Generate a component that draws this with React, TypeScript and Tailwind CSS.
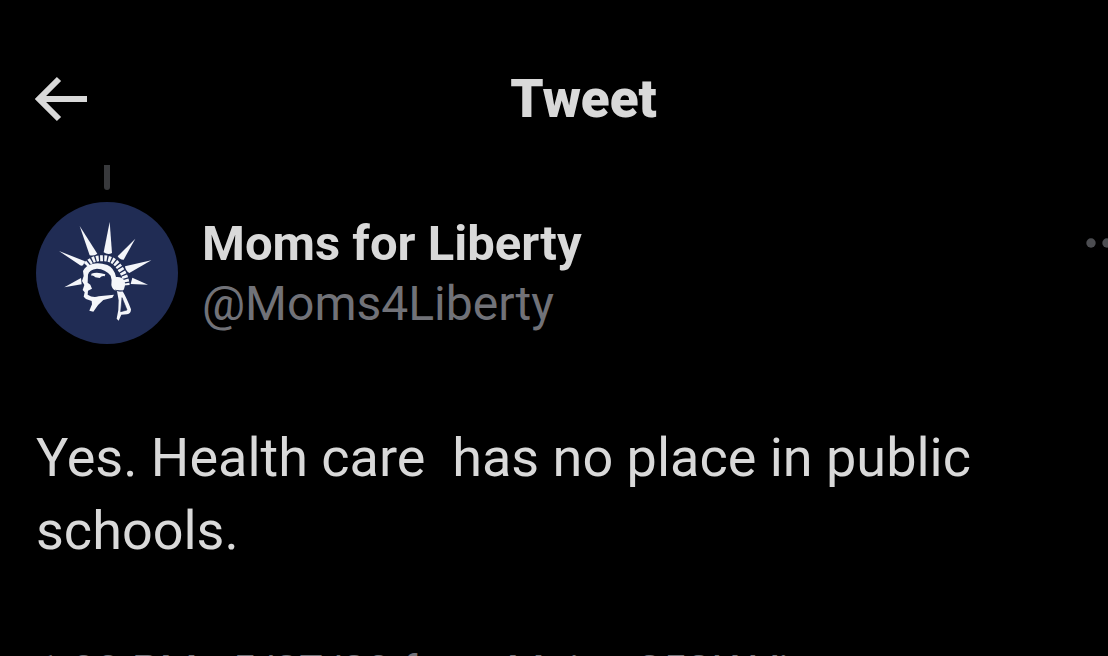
import React from "react";

function BackArrow() {
  return (
    <svg viewBox="0 0 52 46" className="h-[46px] w-[52px]" fill="none" stroke="#d9d9d9" strokeWidth="6" aria-hidden="true">
      <path d="M24 3 4 23l20 20M5 23h47" />
    </svg>
  );
}

function Avatar() {
  return (
    <svg viewBox="0 0 465 465" className="size-[155px]" role="img" aria-label="Moms for Liberty">
      <circle cx="231" cy="234" r="213" fill="#202c54" />
      <g fill="#f4f6fa">
        <path d="M87 168 165 199 159 211Q152 214 146 208Z" />
        <path d="M149 93 202 176Q192 184 179 181Z" />
        <path d="M239 81 246 174Q234 181 221 172Z" />
        <path d="M316 131 281 194Q270 195 263 184Z" />
        <path d="M364 196 298 234Q286 227 285 214Z" />
        <path d="M354 269 302 267 307 248Z" />
        <path d="M103 277 153 249 155 268Z" />
        <path d="M159 228Q167 212 187 207Q207 202 232 210Q252 218 258 246Q276 244 284 258Q288 275 278 289Q290 309 303 343Q303 356 291 358L274 359 266 377 260 371 265 345 266 316 261 289Q246 284 244 270Q247 255 242 242Q226 222 201 221Q177 224 174 239L173 263 181 269 186 281 174 287 173 299Q188 309 206 304L252 299 247 308 220 315Q203 328 190 350L178 347 186 328 185 318 168 312 161 305 164 292 158 285 163 270 156 258 161 243Z" />
        <path d="M184 236Q202 230 226 238L224 244Q216 241 209 249L196 247Q190 240 184 242Z" />
      </g>
      <path d="M276 308 291 345 272 350 274 330ZM255 285Q268 292 283 287" fill="#202c54" stroke="#202c54" strokeWidth="2" />
      <path d="M168 210Q189 188 217 190Q253 188 272 223Q288 245 290 271" fill="none" stroke="#f4f6fa" strokeWidth="18" strokeDasharray="8 4" />
    </svg>
  );
}

export default function App() {
  return (
    <div className="h-screen overflow-hidden bg-black font-['Roboto',sans-serif] text-[#d9d9d9]">
      <header className="grid grid-cols-[1fr_auto_1fr] items-center pt-[68px] pl-[35px]">
        <button aria-label="Back" className="justify-self-start">
          <BackArrow />
        </button>
        <h1 className="pl-6 text-[53px] leading-[62px] font-black">Tweet</h1>
      </header>
      <main>
        <div className="ml-[104px] mt-[35px] h-[25px] w-[6px] rounded-b-full bg-[#38393c]" />
        <article>
          <div className="flex items-start pl-[30px]">
            <div className="mt-[5px] shrink-0">
              <Avatar />
            </div>
            <div className="ml-[17px] mt-6 grow leading-[60px]">
              <h2 className="text-[49px] font-bold">Moms for Liberty</h2>
              <p className="text-[48px] text-[#717278]">@Moms4Liberty</p>
            </div>
            <button aria-label="More" className="-mr-5 mt-12 shrink-0">
              <svg viewBox="0 0 42 10" className="h-[10px] w-[42px]" fill="#4c4d51" aria-hidden="true">
                <circle cx="5" cy="5" r="4.7" />
                <circle cx="21" cy="5" r="4.7" />
                <circle cx="37" cy="5" r="4.7" />
              </svg>
            </button>
          </div>
          <p className="mt-[71px] px-9 text-[54px] leading-[73px] whitespace-pre-wrap">
            {"Yes. Health care  has no place in public schools."}
          </p>
          <p className="mt-[75px] px-9 text-[44px] leading-[60px] whitespace-nowrap text-[#717278]">
            1:33 PM · 5/27/23 from Main · 252K Views
          </p>
        </article>
      </main>
    </div>
  );
}
